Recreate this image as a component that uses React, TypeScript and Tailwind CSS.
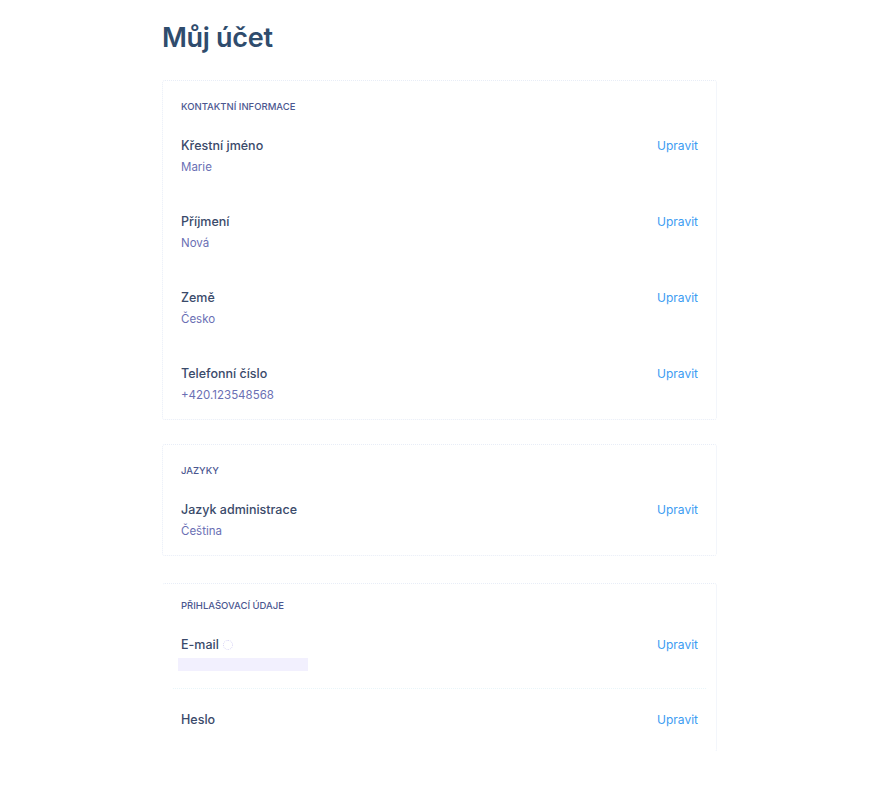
import React from 'react';

type Field = { label: string; value?: string; skeleton?: boolean; info?: boolean };

const sections: { title: string; fields: Field[] }[] = [
  {
    title: 'Kontaktní informace',
    fields: [
      { label: 'Křestní jméno', value: 'Marie' },
      { label: 'Příjmení', value: 'Nová' },
      { label: 'Země', value: 'Česko' },
      { label: 'Telefonní číslo', value: '+420.123548568' },
    ],
  },
  {
    title: 'Jazyky',
    fields: [{ label: 'Jazyk administrace', value: 'Čeština' }],
  },
];

function Row({ field }: { field: Field }) {
  return (
    <div className="flex items-start justify-between">
      <div>
        <div className="flex h-[18px] items-center gap-1 text-[12.5px] font-medium text-[#3a4a6a]">
          {field.label}
          {field.info && (
            <span className="inline-block h-[10px] w-[10px] rounded-full border border-dotted border-[#d6d2f4]" />
          )}
        </div>
        {field.value && (
          <div className="mt-[3px] h-[18px] text-[11.5px] leading-[18px] text-[#6a6fb4]">{field.value}</div>
        )}
        {field.skeleton && (
          <div className="mt-[4px] -ml-[3px] h-[13px] w-[130px] bg-[#f2f0fe]" />
        )}
      </div>
      <button className="text-[12px] leading-[18px] text-[#3c9cf2]">Upravit</button>
    </div>
  );
}

export default function App() {
  return (
    <div className="min-h-screen bg-white" style={{ fontFamily: 'Inter, "Noto Sans", sans-serif' }}>
      <div className="ml-[162px] w-[555px] pt-[20px]">
        <h1 className="text-[27px] font-semibold leading-[36px] tracking-[-0.3px] text-[#2f4c6d]">Můj účet</h1>

        <div className="mt-[24px] flex flex-col gap-[24px]">
          {sections.map((s) => (
            <section
              key={s.title}
              className="rounded-[3px] border border-dotted border-[#e8edf7] px-[18px] pb-[15px] pt-[19px]"
            >
              <h2 className="text-[9.5px] font-medium uppercase leading-[14px] text-[#4b5790]">{s.title}</h2>
              <div className="mt-[23px] flex flex-col gap-[37px]">
                {s.fields.map((f) => (
                  <Row key={f.label} field={f} />
                ))}
              </div>
            </section>
          ))}

          <section className="mt-[3px] rounded-[3px] border border-dotted border-[#e8edf7] border-l-transparent border-b-transparent pb-[22px] pt-[15px]">
            <h2 className="px-[18px] text-[9.5px] font-medium uppercase leading-[14px] text-[#4b5790]">
              Přihlašovací údaje
            </h2>
            <div className="mt-[23px] px-[18px] pb-[17px]">
              <Row field={{ label: 'E-mail', skeleton: true, info: true }} />
            </div>
            <div className="mx-[10px] border-t border-dotted border-[#e9f5f9]" />
            <div className="mt-[22px] px-[18px]">
              <Row field={{ label: 'Heslo' }} />
            </div>
          </section>
        </div>
      </div>
    </div>
  );
}
